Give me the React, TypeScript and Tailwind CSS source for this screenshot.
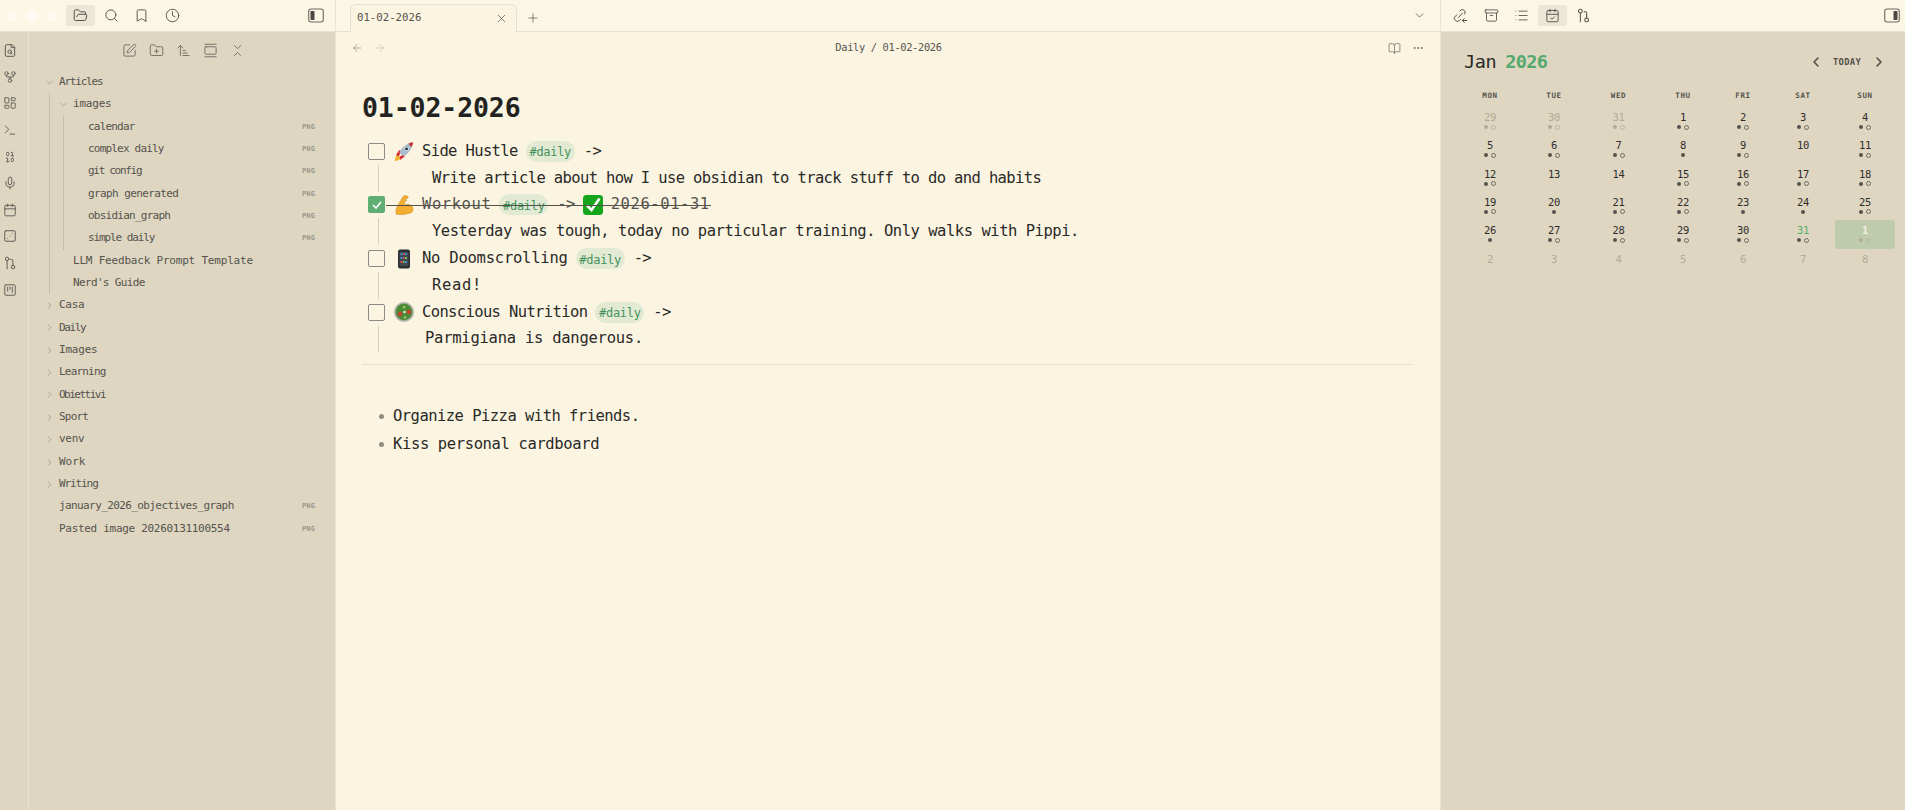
import React from "react";
import {
  FolderOpen, Search, Bookmark, Clock, SquarePen, FolderPlus, ArrowUpNarrowWide, GalleryVertical, ChevronsDownUp,
  GitFork, LayoutDashboard, Terminal, Binary, Mic, Calendar, Dice3, SquareKanban, Archive, List, CalendarCheck,
  BookOpen, Ellipsis, ArrowLeft, ArrowRight, ChevronDown, ChevronRight, ChevronLeft, X, Plus,
} from "lucide-react";

const mono = "font-['DejaVu_Sans_Mono','Liberation_Mono',monospace]";

function Branch({ size = 15 }: { size?: number }) {
  return (
    <svg width={size} height={size} viewBox="0 0 24 24" fill="none" stroke="currentColor" strokeWidth="1.7" strokeLinecap="round" strokeLinejoin="round">
      <circle cx="7" cy="5" r="3" />
      <path d="M7 8v14" />
      <circle cx="17" cy="19" r="3" />
      <path d="M17 16V8a2 2 0 0 0-2-2h-2" />
    </svg>
  );
}

function FileFind() {
  return (
    <svg width="14" height="15" viewBox="0 0 24 24" fill="none" stroke="currentColor" strokeWidth="1.7" strokeLinecap="round" strokeLinejoin="round">
      <path d="M15 2H6a2 2 0 0 0-2 2v16a2 2 0 0 0 2 2h12a2 2 0 0 0 2-2V7z" />
      <path d="M14 2v5h6" />
      <circle cx="11.5" cy="14" r="3" />
      <path d="m14 16.5 1.5 1.5" />
    </svg>
  );
}

function PanelToggle({ right }: { right?: boolean }) {
  return (
    <svg width="16" height="15" viewBox="0 0 16 15" fill="none">
      <rect x="0.7" y="1" width="14.6" height="13" rx="2.5" stroke="#6b6962" strokeWidth="1.1" />
      <rect x={right ? 9.5 : 2.5} y="3" width="4" height="9" rx="0.8" fill="#4a4843" />
    </svg>
  );
}

function BacklinkIcon() {
  return (
    <svg width="15" height="15" viewBox="0 0 24 24" fill="none" stroke="currentColor" strokeWidth="1.6" strokeLinecap="round" strokeLinejoin="round">
      <path d="M9 15 15 8" />
      <path d="M11 5l2-2a4.5 4.5 0 0 1 6 6l-1 1" />
      <path d="M12 18l-2 2a4.5 4.5 0 0 1-6.5-6.5L6 11" />
      <path d="M15 20h7" />
      <path d="m18 17-3 3 3 3" />
    </svg>
  );
}

function Rocket() {
  return (
    <svg width="21" height="21" viewBox="0 0 21 21">
      <path d="M1 20.500c-.3-3 1-5.500 3-6.500l3 3c-1 2.200-3.300 3.500-6 3.500z" fill="#f7b32b" />
      <path d="M2 14.500l3.500-5.500 2.500 1-3 5.500zM6.500 19.500l5-4-1-2.500-4.500 3z" fill="#dc2a2f" />
      <path d="M5.500 11.500C8 6.500 13 2 20 .8c-.8 7-5 12-10 14.700z" fill="#a9bccb" />
      <path d="M15 2.300c1.600-.8 3.200-1.300 5-1.500-.2 1.800-.7 3.500-1.500 5.100z" fill="#c9302c" />
      <circle cx="13.200" cy="7.800" r="2.300" fill="#dde6ed" />
      <circle cx="13.200" cy="7.800" r="1.500" fill="#27303a" />
    </svg>
  );
}

function Arm() {
  return (
    <svg width="19" height="20" viewBox="0 0 19 20">
      <path d="M1.500 19.300C.5 17 .8 14 2 12L7.500 2.500C8 1.200 9 .6 10.500.8l1.800.3c1 .2 1.200 1.800.3 2.200l-1.800.6-.2 1.200 1 .3-1.700 1.200-.9 3.800c2.300-1.600 6-1.400 7.800.6 1.700 1.900 1.700 5.400-.6 6.700-3.800 1.500-9 2.200-14.700 1.600z" fill="#f2ae30" stroke="#c9821a" strokeWidth=".5" />
    </svg>
  );
}

function CheckEmoji() {
  return (
    <svg width="20" height="20" viewBox="0 0 20 20" className="shrink-0">
      <rect width="20" height="20" rx="3.5" fill="#15a41c" />
      <path d="M4 10.500l4.500 4.500L16.500 3.500" fill="none" stroke="#fff" strokeWidth="2.600" />
    </svg>
  );
}

function Phone() {
  return (
    <svg width="20" height="20" viewBox="0 0 20 20">
      <rect x="4" y="0.500" width="12" height="19" rx="2" fill="#2c3033" />
      <rect x="5.500" y="3" width="9" height="14" fill="#414a50" />
      <path d="M6.500 4h2v2h-2zM11 4h2v2h-2zM6.500 8h2v2h-2zM11 12h2v2h-2z" fill="#3f8fd2" />
      <path d="M9 4h1.500v2H9zM9 8h1.500v2H9zM6.500 12h2v2h-2z" fill="#d9534f" />
      <path d="M11 8h2v2h-2zM9 12h1.500v2H9z" fill="#7fbf4d" />
    </svg>
  );
}

function Salad() {
  return (
    <svg width="20" height="20" viewBox="0 0 20 20">
      <circle cx="10" cy="10" r="10" fill="#aeb2a8" />
      <circle cx="10" cy="10" r="8.300" fill="#4d8a36" />
      <circle cx="6" cy="12" r="2.200" fill="#c84133" />
      <circle cx="15" cy="10" r="2.200" fill="#c84133" />
      <circle cx="10" cy="5" r="1.500" fill="#8fc25f" />
      <circle cx="10.500" cy="10" r="1.300" fill="#e8e6c9" />
      <circle cx="11" cy="15.500" r="1.400" fill="#8fc25f" />
    </svg>
  );
}

function Tag() {
  return (
    <span className="inline-flex items-center justify-center h-[21px] w-[49px] rounded-full bg-[#e3ead4] text-[#43925c] text-[12px] tracking-[-0.3px] pt-[2px]">#daily</span>
  );
}

function TopIcon({ active, children }: { active?: boolean; children: React.ReactNode }) {
  return (
    <div className={`w-[29px] h-[21px] mr-[1.7px] flex items-center justify-center rounded-[3px] text-[#55534d] ${active ? "bg-[#ece6d5] text-[#35332f]" : ""}`}>
      {children}
    </div>
  );
}

function Png() {
  return <span className="ml-auto text-[7px] font-bold text-[#9b968a] tracking-[0.1px]">PNG</span>;
}

function Row({ label, chevron, png, track }: { label: string; chevron?: "open" | "closed"; png?: boolean; track: string }) {
  return (
    <div className="flex items-center h-[22.35px] text-[11px] text-[#55534d]">
      <span className="w-[15px] shrink-0 flex text-[#958f80]">
        {chevron === "open" && <ChevronDown size={11} strokeWidth={1.4} />}
        {chevron === "closed" && <ChevronRight size={11} strokeWidth={1.4} />}
      </span>
      <span className={`whitespace-nowrap ${track}`}>{label}</span>
      {png && <Png />}
    </div>
  );
}

function Sidebar() {
  const ribbon = [
    <FileFind />, <GitFork size={14} strokeWidth={1.6} />, <LayoutDashboard size={14} strokeWidth={1.5} />,
    <Terminal size={14} strokeWidth={1.6} />, <Binary size={14} strokeWidth={1.6} />, <Mic size={14} strokeWidth={1.6} />,
    <Calendar size={14} strokeWidth={1.6} />, <Dice3 size={14} strokeWidth={1.7} />, <Branch size={14} />,
    <SquareKanban size={14} strokeWidth={1.6} />,
  ];
  const folders = [
    { n: "Casa", t: "tracking-[-0.3px]" },
    { n: "Daily", t: "tracking-[-1.4px]" },
    { n: "Images", t: "tracking-[-0.2px]" },
    { n: "Learning", t: "tracking-[-0.8px]" },
    { n: "Obiettivi", t: "tracking-[-1.5px]" },
    { n: "Sport", t: "tracking-[-0.8px]" },
    { n: "venv", t: "tracking-[-0.3px]" },
    { n: "Work", t: "tracking-[0px]" },
    { n: "Writing", t: "tracking-[-1.1px]" },
  ];
  const files = [
    { n: "calendar", t: "tracking-[-0.8px]" },
    { n: "complex daily", t: "tracking-[-0.8px]" },
    { n: "git config", t: "tracking-[-1.3px]" },
    { n: "graph generated", t: "tracking-[-0.6px]" },
    { n: "obsidian_graph", t: "tracking-[-0.75px]" },
    { n: "simple daily", t: "tracking-[-1.1px]" },
  ];
  return (
    <div className="w-[336px] shrink-0 flex flex-col border-r border-[#e8e3d5] bg-[#fcf6e4]">
      <div className="h-[32px] shrink-0 flex items-center border-b border-[#e5e0d2] pl-[3px]">
        <div className="flex gap-[8px] pl-[3px]">
          <span className="w-[12px] h-[12px] rounded-full bg-[#fefaf0]" />
          <span className="w-[12px] h-[12px] rounded-full bg-[#fefaf0]" />
          <span className="w-[12px] h-[12px] rounded-full bg-[#fefaf0]" />
        </div>
        <div className="flex ml-[8px]">
          <TopIcon active><FolderOpen size={15} strokeWidth={1.6} /></TopIcon>
          <TopIcon><Search size={15} strokeWidth={1.5} /></TopIcon>
          <TopIcon><Bookmark size={15} strokeWidth={1.5} /></TopIcon>
          <TopIcon><Clock size={15} strokeWidth={1.5} /></TopIcon>
        </div>
        <div className="ml-auto mr-[11px] flex"><PanelToggle /></div>
      </div>
      <div className="flex-1 flex min-h-0">
        <div className="w-[29px] shrink-0 border-r border-[#e8e3d5] bg-[#ded6c1] pl-[2px] pt-[5px] flex flex-col text-[#5e5c55]">
          {ribbon.map((ic, i) => (
            <div key={i} className="h-[26.6px] flex items-center justify-center w-[16px]">{ic}</div>
          ))}
        </div>
        <div className={`flex-1 bg-[#ded6c1] ${mono} pr-[20px] pl-[15px]`}>
          <div className="h-[39px] flex items-center gap-[12px] pl-[78px] text-[#6a675f] pb-[2px]">
            <SquarePen size={15} strokeWidth={1.4} />
            <FolderPlus size={15} strokeWidth={1.4} />
            <ArrowUpNarrowWide size={15} strokeWidth={1.4} />
            <GalleryVertical size={15} strokeWidth={1.4} />
            <ChevronsDownUp size={15} strokeWidth={1.4} />
          </div>
          <Row label="Articles" chevron="open" track="tracking-[-1.2px]" />
          <div className="ml-[5px] border-l border-[#c7bea8] pl-[8px]">
            <Row label="images" chevron="open" track="tracking-[-0.2px]" />
            <div className="ml-[5px] border-l border-[#c7bea8] pl-[9px]">
              {files.map((f) => <Row key={f.n} label={f.n} png track={f.t} />)}
            </div>
            <Row label="LLM Feedback Prompt Template" track="tracking-[-0.2px]" />
            <Row label="Nerd's Guide" track="tracking-[-0.65px]" />
          </div>
          {folders.map((f) => <Row key={f.n} label={f.n} chevron="closed" track={f.t} />)}
          <Row label="january_2026_objectives_graph" png track="tracking-[-0.6px]" />
          <Row label="Pasted image 20260131100554" png track="tracking-[-0.3px]" />
        </div>
      </div>
    </div>
  );
}

function Task({ emoji, title, titleClass = "", after, done }: { emoji: React.ReactNode; title: string; titleClass?: string; after?: React.ReactNode; done?: boolean }) {
  return (
    <div className={`relative h-[26.8px] flex items-center pl-[6px] ${done ? "text-[#55534d]" : "text-[#2a2a28]"}`}>
      {done ? (
        <span className="w-[17px] h-[17px] rounded-[2px] bg-[#5fae74] flex items-center justify-center shrink-0">
          <svg width="10" height="8" viewBox="0 0 10 8"><path d="M1 4l3 3 5-6" fill="none" stroke="#fff" strokeWidth="1.600" /></svg>
        </span>
      ) : (
        <span className="w-[17px] h-[17px] rounded-[2px] border border-[#8c8a84] shrink-0" />
      )}
      <span className="w-[20px] ml-[9px] mr-[8px] flex items-center justify-center shrink-0">{emoji}</span>
      <span className={`whitespace-nowrap ${titleClass}`}>{title}</span>
      <span className="ml-[8px] mr-[9px] flex"><Tag /></span>
      <span>-&gt;</span>
      {after}
      {done && <span className="absolute left-[24px] top-[13px] w-[325px] h-[1.5px] bg-[#55534d]" />}
    </div>
  );
}

function Sub({ text, pad }: { text: string; pad: string }) {
  return (
    <div className={`ml-[16px] border-l border-[#d6d0bf] h-[26.8px] flex items-center text-[#2a2a28] whitespace-nowrap ${pad}`}>{text}</div>
  );
}

function Main() {
  return (
    <div className={`flex-1 min-w-0 flex flex-col bg-[#fbf4e1] ${mono}`}>
      <div className="h-[32px] shrink-0 flex items-end bg-[#fcf6e4] border-b border-[#e5e0d2] pl-[14px] pr-[14px] relative">
        <div className="w-[167px] h-[28px] -mb-px bg-[#fbf4e1] border border-b-0 border-[#e5e0d2] rounded-t-[6px] flex items-center pl-[6px] pr-[8px] text-[10.7px] text-[#55534d]">
          01-02-2026
          <X size={13} strokeWidth={1.3} className="ml-auto text-[#4a4843]" />
        </div>
        <Plus size={14} strokeWidth={1.2} className="ml-[9px] mb-[6px] text-[#55534d]" />
        <ChevronDown size={13} strokeWidth={1.4} className="ml-auto mb-[9px] text-[#55534d]" />
      </div>
      <div className="h-[32px] shrink-0 flex items-center pl-[15px] pr-[16px] text-[#8d8a80]">
        <ArrowLeft size={12} strokeWidth={1.4} />
        <ArrowRight size={12} strokeWidth={1.4} className="ml-[11px] text-[#c5c2b5]" />
        <div className="flex-1 text-center text-[10.4px] tracking-[-0.35px] text-[#55534d] pl-[3px]">Daily / 01-02-2026</div>
        <BookOpen size={13} strokeWidth={1.3} className="text-[#6a675f]" />
        <Ellipsis size={12} strokeWidth={1.8} className="ml-[11px] text-[#6a675f]" />
      </div>
      <div className="pl-[26px] pr-[27px] text-[15.5px] tracking-[-0.63px]">
        <h1 className="mt-[27px] h-[34px] leading-[34px] text-[26.5px] font-bold tracking-[-0.1px] text-[#222220]">01-02-2026</h1>
        <div className="mt-[13px]">
          <Task emoji={<Rocket />} title="Side Hustle" />
          <Sub text="Write article about how I use obsidian to track stuff to do and habits" pad="pl-[53px]" />
          <Task
            done
            emoji={<Arm />}
            title="Workout"
            titleClass="tracking-[0.57px]"
            after={
              <>
                <span className="ml-[8px] mr-[8px] flex"><CheckEmoji /></span>
                <span className="tracking-[0.57px]">2026-01-31</span>
              </>
            }
          />
          <Sub text="Yesterday was tough, today no particular training. Only walks with Pippi." pad="pl-[53px] tracking-[-0.47px]" />
          <Task emoji={<Phone />} title="No Doomscrolling" titleClass="tracking-[-0.23px]" />
          <Sub text="Read!" pad="pl-[53px] tracking-[0.67px]" />
          <Task emoji={<Salad />} title="Conscious Nutrition" />
          <Sub text="Parmigiana is dangerous." pad="pl-[46px] tracking-[-0.25px]" />
        </div>
        <div className="mt-[12px] border-t border-[#e5e0d2]" />
        <ul className="mt-[37px] text-[#2a2a28]">
          {[
            { t: "Organize Pizza with friends.", c: "tracking-[-0.53px]" },
            { t: "Kiss personal cardboard", c: "tracking-[-0.37px]" },
          ].map(({ t, c }) => (
            <li key={t} className={`h-[28px] flex items-center ${c}`}>
              <span className="ml-[17px] mr-[9px] w-[5px] h-[5px] rounded-full bg-[#8f8b7e]" />
              {t}
            </li>
          ))}
        </ul>
      </div>
    </div>
  );
}

type Cell = { d: number; dots: 0 | 1 | 2; faded?: boolean; green?: boolean; selected?: boolean };
const nums: [number, 0 | 1 | 2][] = [
  [5, 2], [6, 2], [7, 2], [8, 1], [9, 2], [10, 0], [11, 2],
  [12, 2], [13, 0], [14, 0], [15, 2], [16, 2], [17, 2], [18, 2],
  [19, 2], [20, 1], [21, 2], [22, 2], [23, 1], [24, 1], [25, 2],
  [26, 1], [27, 2], [28, 2], [29, 2], [30, 2],
];
const cells: Cell[] = [
  { d: 29, dots: 2, faded: true }, { d: 30, dots: 2, faded: true }, { d: 31, dots: 2, faded: true },
  { d: 1, dots: 2 }, { d: 2, dots: 2 }, { d: 3, dots: 2 }, { d: 4, dots: 2 },
  ...nums.map(([d, dots]) => ({ d, dots })),
  { d: 31, dots: 2, green: true },
  { d: 1, dots: 2, selected: true },
  ...[2, 3, 4, 5, 6, 7, 8].map((d) => ({ d, dots: 0 as const, faded: true })),
];

function Day({ c }: { c: Cell }) {
  const color = c.selected ? "text-[#f2f0e0]" : c.green ? "text-[#55b06f]" : c.faded ? "text-[#b1aa99]" : "text-[#2f2e2b]";
  const dot = c.faded || c.selected ? "bg-[#b1aa99]" : "bg-[#55534d]";
  const ring = c.faded || c.selected ? "border-[#b9b2a1]" : "border-[#6b6962]";
  return (
    <div className={`h-[28.33px] flex flex-col items-center pt-[3px] leading-[14px] rounded-[3px] ${c.selected ? "bg-[#bfcbad]" : ""}`}>
      <span className={`text-[10.5px] h-[14px] tracking-[-0.3px] ${color} ${c.selected ? "font-bold" : ""}`}>{c.d}</span>
      <span className="flex items-center gap-[3px] h-[6px]">
        {c.dots > 0 && <span className={`w-[4px] h-[4px] rounded-full ${dot}`} />}
        {c.dots > 1 && <span className={`w-[5px] h-[5px] rounded-full border ${ring}`} />}
      </span>
    </div>
  );
}

function RightPane() {
  const head = ["MON", "TUE", "WED", "THU", "FRI", "SAT", "SUN"];
  return (
    <div className={`w-[465px] shrink-0 flex flex-col border-l border-[#e8e3d5] ${mono}`}>
      <div className="h-[32px] shrink-0 flex items-center pl-[5px] pr-[5px] bg-[#fcf6e4] border-b border-[#e5e0d2]">
        <TopIcon><BacklinkIcon /></TopIcon>
        <TopIcon><Archive size={15} strokeWidth={1.4} /></TopIcon>
        <TopIcon><List size={15} strokeWidth={1.4} /></TopIcon>
        <TopIcon active><CalendarCheck size={15} strokeWidth={1.5} /></TopIcon>
        <TopIcon><Branch /></TopIcon>
        <div className="ml-auto flex"><PanelToggle right /></div>
      </div>
      <div className="flex-1 bg-[#ded6c1] pl-[17px]">
        <div className="h-[53px] flex items-center pt-[7px] pl-[6px]">
          <span className="text-[18.5px] text-[#2a2a28] tracking-[-0.4px]">Jan</span>
          <span className="ml-[9px] text-[18.5px] font-bold text-[#55a96f] tracking-[-0.6px]">2026</span>
          <ChevronLeft size={16} strokeWidth={2.2} className="ml-auto text-[#4a4843]" />
          <span className="ml-[9px] mr-[10px] mt-[2px] text-[8.8px] font-bold text-[#55534d] tracking-[0.3px]">TODAY</span>
          <ChevronRight size={16} strokeWidth={2.2} className="mr-[18px] text-[#4a4843]" />
        </div>
        <div className="grid grid-cols-[64px_64px_65px_64px_56px_64px_60px]">
          {head.map((h) => (
            <div key={h} className="h-[22px] flex items-center justify-center text-[7.500px] font-bold text-[#55534d] tracking-[0.6px]">{h}</div>
          ))}
          {cells.map((c, i) => <Day key={i} c={c} />)}
        </div>
      </div>
    </div>
  );
}

export default function App() {
  return (
    <div className="w-full h-screen overflow-hidden flex bg-[#fbf4e1]">
      <Sidebar />
      <Main />
      <RightPane />
    </div>
  );
}
